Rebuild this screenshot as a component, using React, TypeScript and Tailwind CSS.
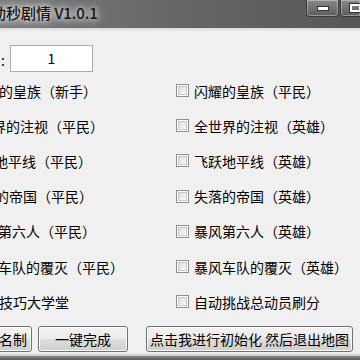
import React from "react";

const leftRows: { text: string; ml: string }[] = [
  { text: "闪耀的皇族（新手）", ml: "ml-[-29px]" },
  { text: "全世界的注视（平民）", ml: "ml-[-36px]" },
  { text: "飞跃地平线（平民）", ml: "ml-[-34px]" },
  { text: "失落的帝国（平民）", ml: "ml-[-33px]" },
  { text: "暴风第六人（平民）", ml: "ml-[-30px]" },
  { text: "暴风车队的覆灭（平民）", ml: "ml-[-30px]" },
  { text: "技巧大学堂", ml: "ml-[-1px]" },
];

const rightRows = [
  "闪耀的皇族（平民）",
  "全世界的注视（英雄）",
  "飞跃地平线（英雄）",
  "失落的帝国（英雄）",
  "暴风第六人（英雄）",
  "暴风车队的覆灭（英雄）",
  "自动挑战总动员刷分",
];

function CheckBox() {
  return (
    <div className="w-[13px] h-[13px] shrink-0 border border-[#8e8f8f] bg-white p-[1px]">
      <div className="w-full h-full bg-gradient-to-br from-[#dcdcdc] to-[#fbfbfb] border border-[#c8c8c8]" />
    </div>
  );
}

const btn =
  "h-[26px] shrink-0 flex items-center rounded-[3px] border border-[#707070] shadow-[inset_0_0_0_1px_#fcfcfc] bg-[linear-gradient(#f2f2f2_0%,#ebebeb_50%,#dddddd_50%,#cfcfcf_100%)] text-[14px] text-black whitespace-nowrap";

export default function App() {
  return (
    <div
      className="w-[360px] h-[360px] overflow-hidden bg-[#f0f0f0] flex flex-col text-black"
      style={{ fontFamily: '"Noto Sans CJK SC", "Noto Sans", sans-serif' }}
    >
      {/* title bar */}
      <div className="h-[28px] shrink-0 flex items-start bg-[linear-gradient(90deg,#7c7c7c_0%,#6a6a6a_40%,#565656_100%)] overflow-hidden">
        <div className="ml-[-24px] mt-[3px] text-[15px] leading-[20px] font-medium text-[#141414] whitespace-nowrap [text-shadow:0_0_6px_#ffffff,0_0_10px_rgba(255,255,255,0.8)]">
          自动秒剧情 V1.0.1
        </div>
        <div className="ml-auto flex items-start">
          <div className="w-[33px] h-[17px] mr-[1px] rounded-b-[4px] border border-t-0 border-[#3a3a3a] shadow-[inset_0_0_0_1px_rgba(255,255,255,0.35)] bg-[linear-gradient(#8a8a8a,#5c5c5c)] flex items-center justify-center">
            <div className="w-[10px] h-[3px] bg-white border border-[#333] box-content" />
          </div>
          <div className="w-[20px] h-[17px] rounded-bl-[4px] border border-t-0 border-r-0 border-[#3a3a3a] shadow-[inset_0_0_0_1px_rgba(255,255,255,0.35)] bg-[linear-gradient(#8a8a8a,#5c5c5c)] flex items-center pl-[9px]">
            <div className="w-[11px] h-[8px] shrink-0 border-2 border-white outline outline-1 outline-[#333]" />
          </div>
        </div>
      </div>
      <div className="h-[3px] shrink-0 bg-[linear-gradient(#d9d9d9,#ececec)]" />

      {/* input row */}
      <div className="h-[42px] shrink-0 flex items-start">
        <span className="mt-[19px] ml-[1px] w-[9px] text-[14px] leading-[20px]">:</span>
        <div className="mt-[14px] w-[83px] h-[27px] shrink-0 bg-white border border-[#abadb3] flex items-center justify-center text-[14px]">
          1
        </div>
      </div>

      {/* rows */}
      <div className="grid grid-cols-[176px_1fr]">
        {leftRows.map((r, i) => (
          <React.Fragment key={i}>
            <div className="h-[35.2px] flex items-center overflow-hidden">
              <span className={`${r.ml} text-[14px] leading-[20px] whitespace-nowrap`}>{r.text}</span>
            </div>
            <div className="h-[35.2px] flex items-center gap-[5px]">
              <CheckBox />
              <span className="text-[14px] leading-[20px] whitespace-nowrap">{rightRows[i]}</span>
            </div>
          </React.Fragment>
        ))}
      </div>

      {/* buttons */}
      <div className="mt-[7px] flex items-center">
        <div className={`${btn} w-[50px] ml-[-18px] justify-end pr-[4px]`}>名制</div>
        <div className={`${btn} w-[90px] ml-[6px] justify-center`}>一键完成</div>
        <div className={`${btn} w-[207px] ml-[18px] justify-center`}>点击我进行初始化 然后退出地图</div>
      </div>

      <div className="mt-[2px] h-[2px] shrink-0 bg-[#d0d0d0]" />
      <div className="flex-1 bg-[linear-gradient(#8a8a8a,#5a5a5a)]" />
    </div>
  );
}
